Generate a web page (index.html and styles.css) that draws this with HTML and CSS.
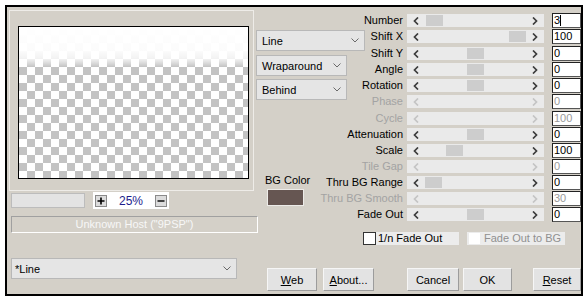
FILE: index.html
```html
<!DOCTYPE html>
<html>
<head>
<meta charset="utf-8">
<link rel="stylesheet" href="styles.css">
</head>
<body>
<div class="dialog">
  <div class="top">
    <div class="left">
      <div class="frame"><div class="preview"></div></div>
      <div class="zoomrow">
        <div class="graybox"></div>
        <div class="zoomctl">
          <span class="zbtn"><svg width="8" height="8" viewBox="0 0 8 8"><path d="M4 0.5v7M0.5 4h7" stroke="#000" stroke-width="1.6"/></svg></span>
          <span class="zval">25%</span>
          <span class="zbtn"><svg width="8" height="8" viewBox="0 0 8 8"><path d="M0.5 4h7" stroke="#000" stroke-width="1.4"/></svg></span>
        </div>
      </div>
      <div class="host">Unknown Host ("9PSP")</div>
    </div>
    <div class="mid">
      <div class="select s-line"><span>Line</span><svg class="chev" width="8" height="5" viewBox="0 0 8 5"><polyline points="0.5,0.5 4,4 7.5,0.5" fill="none" stroke="#6a6a6a"/></svg></div>
      <div class="select s-wrap"><span>Wraparound</span><svg class="chev" width="8" height="5" viewBox="0 0 8 5"><polyline points="0.5,0.5 4,4 7.5,0.5" fill="none" stroke="#6a6a6a"/></svg></div>
      <div class="select s-behind"><span>Behind</span><svg class="chev" width="8" height="5" viewBox="0 0 8 5"><polyline points="0.5,0.5 4,4 7.5,0.5" fill="none" stroke="#6a6a6a"/></svg></div>
      <div class="bglabel">BG Color</div>
      <div class="swatch"></div>
    </div>
    <div class="right">
      <div class="row"><div class="lbl">Number</div><div class="track"><svg class="arr" width="6" height="8" viewBox="0 0 6 8"><polyline points="5,0.5 1.5,4 5,7.5" fill="none"/></svg><div class="thumb" style="left:19px"></div><svg class="arr" width="6" height="8" viewBox="0 0 6 8"><polyline points="1,0.5 4.5,4 1,7.5" fill="none"/></svg></div><div class="val">3<span class="caret"></span></div></div>
      <div class="row tall"><div class="lbl">Shift X</div><div class="track"><svg class="arr" width="6" height="8" viewBox="0 0 6 8"><polyline points="5,0.5 1.5,4 5,7.5" fill="none"/></svg><div class="thumb" style="left:102px"></div><svg class="arr" width="6" height="8" viewBox="0 0 6 8"><polyline points="1,0.5 4.5,4 1,7.5" fill="none"/></svg></div><div class="val">100</div></div>
      <div class="row"><div class="lbl">Shift Y</div><div class="track"><svg class="arr" width="6" height="8" viewBox="0 0 6 8"><polyline points="5,0.5 1.5,4 5,7.5" fill="none"/></svg><div class="thumb" style="left:60px"></div><svg class="arr" width="6" height="8" viewBox="0 0 6 8"><polyline points="1,0.5 4.5,4 1,7.5" fill="none"/></svg></div><div class="val">0</div></div>
      <div class="row"><div class="lbl">Angle</div><div class="track"><svg class="arr" width="6" height="8" viewBox="0 0 6 8"><polyline points="5,0.5 1.5,4 5,7.5" fill="none"/></svg><div class="thumb" style="left:60px"></div><svg class="arr" width="6" height="8" viewBox="0 0 6 8"><polyline points="1,0.5 4.5,4 1,7.5" fill="none"/></svg></div><div class="val">0</div></div>
      <div class="row"><div class="lbl">Rotation</div><div class="track"><svg class="arr" width="6" height="8" viewBox="0 0 6 8"><polyline points="5,0.5 1.5,4 5,7.5" fill="none"/></svg><div class="thumb" style="left:60px"></div><svg class="arr" width="6" height="8" viewBox="0 0 6 8"><polyline points="1,0.5 4.5,4 1,7.5" fill="none"/></svg></div><div class="val">0</div></div>
      <div class="row tall dis"><div class="lbl">Phase</div><div class="track"><svg class="arr" width="6" height="8" viewBox="0 0 6 8"><polyline points="5,0.5 1.5,4 5,7.5" fill="none"/></svg><svg class="arr" width="6" height="8" viewBox="0 0 6 8"><polyline points="1,0.5 4.5,4 1,7.5" fill="none"/></svg></div><div class="val">0</div></div>
      <div class="row dis"><div class="lbl">Cycle</div><div class="track"><svg class="arr" width="6" height="8" viewBox="0 0 6 8"><polyline points="5,0.5 1.5,4 5,7.5" fill="none"/></svg><svg class="arr" width="6" height="8" viewBox="0 0 6 8"><polyline points="1,0.5 4.5,4 1,7.5" fill="none"/></svg></div><div class="val">100</div></div>
      <div class="row"><div class="lbl">Attenuation</div><div class="track"><svg class="arr" width="6" height="8" viewBox="0 0 6 8"><polyline points="5,0.5 1.5,4 5,7.5" fill="none"/></svg><div class="thumb" style="left:60px"></div><svg class="arr" width="6" height="8" viewBox="0 0 6 8"><polyline points="1,0.5 4.5,4 1,7.5" fill="none"/></svg></div><div class="val">0</div></div>
      <div class="row"><div class="lbl">Scale</div><div class="track"><svg class="arr" width="6" height="8" viewBox="0 0 6 8"><polyline points="5,0.5 1.5,4 5,7.5" fill="none"/></svg><div class="thumb" style="left:39px"></div><svg class="arr" width="6" height="8" viewBox="0 0 6 8"><polyline points="1,0.5 4.5,4 1,7.5" fill="none"/></svg></div><div class="val">100</div></div>
      <div class="row dis"><div class="lbl">Tile Gap</div><div class="track"><svg class="arr" width="6" height="8" viewBox="0 0 6 8"><polyline points="5,0.5 1.5,4 5,7.5" fill="none"/></svg><svg class="arr" width="6" height="8" viewBox="0 0 6 8"><polyline points="1,0.5 4.5,4 1,7.5" fill="none"/></svg></div><div class="val">0</div></div>
      <div class="row"><div class="lbl">Thru BG Range</div><div class="track"><svg class="arr" width="6" height="8" viewBox="0 0 6 8"><polyline points="5,0.5 1.5,4 5,7.5" fill="none"/></svg><div class="thumb" style="left:18px"></div><svg class="arr" width="6" height="8" viewBox="0 0 6 8"><polyline points="1,0.5 4.5,4 1,7.5" fill="none"/></svg></div><div class="val">0</div></div>
      <div class="row dis"><div class="lbl">Thru BG Smooth</div><div class="track"><svg class="arr" width="6" height="8" viewBox="0 0 6 8"><polyline points="5,0.5 1.5,4 5,7.5" fill="none"/></svg><svg class="arr" width="6" height="8" viewBox="0 0 6 8"><polyline points="1,0.5 4.5,4 1,7.5" fill="none"/></svg></div><div class="val">30</div></div>
      <div class="row"><div class="lbl">Fade Out</div><div class="track"><svg class="arr" width="6" height="8" viewBox="0 0 6 8"><polyline points="5,0.5 1.5,4 5,7.5" fill="none"/></svg><div class="thumb" style="left:60px"></div><svg class="arr" width="6" height="8" viewBox="0 0 6 8"><polyline points="1,0.5 4.5,4 1,7.5" fill="none"/></svg></div><div class="val">0</div></div>
      <div class="checks">
        <div class="cb1"><span class="box"></span><span class="cbtext">1/n Fade Out</span></div>
        <div class="cb2"><span class="box"></span><span class="cbtext">Fade Out to BG</span></div>
      </div>
    </div>
  </div>
  <div class="bottom">
    <div class="select s-preset"><span>*Line</span><svg class="chev" width="8" height="5" viewBox="0 0 8 5"><polyline points="0.5,0.5 4,4 7.5,0.5" fill="none" stroke="#6a6a6a"/></svg></div>
    <div class="btn b-web"><u>W</u>eb</div>
    <div class="btn b-about"><u>A</u>bout...</div>
    <div class="btn b-cancel">Cancel</div>
    <div class="btn b-ok">OK</div>
    <div class="btn b-reset"><u>R</u>eset</div>
  </div>
</div>
</body>
</html>
```

FILE: styles.css
```css
* { box-sizing: border-box; }
body {
  margin: 0;
  padding: 5px;
  background: #fff;
  font-family: "Liberation Sans", Arial, sans-serif;
  font-size: 11px;
  color: #000;
}
.dialog {
  width: 578px;
  height: 291px;
  border: 2px solid #000;
  background: #d4d0c8;
}
.top {
  display: flex;
  height: 251px;
  padding-top: 3px;
}
.left {
  margin-left: 2px;
  width: 245px;
  flex: none;
}
.frame {
  width: 245px;
  height: 181px;
  border: 1px solid #eeece8;
  padding: 15px 0 0 8px;
}
.preview {
  width: 231px;
  height: 153px;
  border: 1px solid #000;
  background-color: #fff;
  background-image:
    linear-gradient(to bottom, #fff 0, rgba(255,255,255,0.94) 24px, rgba(255,255,255,0.78) 32px, rgba(255,255,255,0.4) 36px, rgba(255,255,255,0) 40px),
    conic-gradient(#c3c3c3 0 25%, #fff 0 50%, #c3c3c3 0 75%, #fff 0);
  background-size: 100% 40px, 16px 16px;
  background-repeat: no-repeat, repeat;
}
.zoomrow {
  display: flex;
  align-items: flex-start;
  margin-top: 1px;
}
.graybox {
  margin: 1px 0 0 2px;
  width: 74px;
  height: 15px;
  background: #e3e3e3;
  border: 1px solid #bcbcbc;
}
.zoomctl {
  margin-left: 8px;
  width: 76px;
  height: 17px;
  background: #fff;
  display: flex;
  align-items: center;
  padding: 0 2px;
}
.zbtn {
  width: 12px;
  height: 12px;
  border: 1px solid #8a8a8a;
  background: #dcdcdc;
  display: flex;
  align-items: center;
  justify-content: center;
  flex: none;
}
.zval {
  flex: 1;
  text-align: center;
  color: #1c1c8c;
  font-size: 12px;
}
.host {
  margin: 7px 0 0 2px;
  width: 247px;
  height: 17px;
  border: 1px solid;
  border-color: #a0a0a0 #fff #fff #a0a0a0;
  color: #f7f7f7;
  text-align: center;
  line-height: 15px;
  font-size: 11px;
}
.mid {
  margin-left: 2px;
  width: 52px;
  flex: none;
}
.select {
  display: flex;
  align-items: center;
  justify-content: space-between;
  height: 21px;
  border: 1px solid #b8b8b8;
  background: #e5e5e5;
  padding: 0 5px 0 5px;
  white-space: nowrap;
  flex: none;
}
.s-line { margin-top: 20px; width: 109px; }
.s-wrap { margin-top: 4px; width: 91px; }
.s-behind { margin-top: 3px; width: 91px; }
.bglabel {
  margin: 74px 0 0 9px;
  line-height: 13px;
  white-space: nowrap;
}
.swatch {
  margin: 2px 0 0 11px;
  width: 37px;
  height: 17px;
  background: #665652;
  border: 1px solid #ecebe8;
}
.right {
  width: 273px;
  flex: none;
  padding-top: 3px;
}
.row {
  display: flex;
  align-items: flex-start;
  height: 16px;
}
.row.tall { height: 17px; }
.lbl {
  width: 95px;
  height: 13px;
  margin-top: 1px;
  line-height: 13px;
  text-align: right;
  white-space: nowrap;
  flex: none;
}
.track {
  position: relative;
  margin: 1px 0 0 4px;
  width: 137px;
  height: 13px;
  background: #eaeaea;
  display: flex;
  align-items: center;
  justify-content: space-between;
  padding: 0 6px;
  flex: none;
}
.arr polyline {
  stroke: #3c3c3c;
  stroke-width: 1.7;
}
.thumb {
  position: absolute;
  top: 1px;
  width: 17px;
  height: 11px;
  background: #cdcdcd;
}
.val {
  margin-left: 8px;
  width: 29px;
  height: 15px;
  background: #fff;
  border: 1px solid;
  border-color: #222 #555 #555 #222;
  padding-left: 1px;
  line-height: 13px;
  flex: none;
  display: flex;
  align-items: center;
}
.caret {
  display: inline-block;
  width: 1px;
  height: 11px;
  background: #000;
}
.dis .lbl { color: #a3a3a3; }
.dis .val { color: #9a9a9a; }
.dis .arr polyline { stroke: #c4c4c4; }
.checks {
  display: flex;
  margin: 9px 0 0 55px;
}
.cb1, .cb2 {
  display: flex;
  align-items: center;
  height: 13px;
}
.cb1 .box {
  width: 13px;
  height: 13px;
  border: 1px solid #333;
  background: #fff;
}
.cb1 .cbtext {
  background: #ececec;
  width: 83px;
  height: 13px;
  line-height: 13px;
  padding-left: 2px;
}
.cb2 {
  margin-left: 8px;
  width: 98px;
  background: #ececec;
  padding-left: 2px;
}
.cb2 .box {
  width: 11px;
  height: 11px;
  background: #fff;
}
.cb2 .cbtext {
  margin-left: 4px;
  color: #909090;
  line-height: 13px;
}
.bottom {
  display: flex;
  align-items: flex-start;
  padding-left: 4px;
}
.s-preset {
  width: 226px;
  padding-left: 3px;
}
.btn {
  margin-top: 10px;
  height: 23px;
  border: 1px solid;
  border-color: #f6f6f6 #9c9c9c #9c9c9c #f6f6f6;
  background: #e3e3e3;
  display: flex;
  align-items: center;
  justify-content: center;
  white-space: nowrap;
}
.btn u { text-decoration: underline; }
.b-web { margin-left: 30px; width: 50px; }
.b-about { margin-left: 6px; width: 51px; }
.b-cancel { margin-left: 33px; width: 52px; }
.b-ok { margin-left: 4px; width: 49px; }
.b-reset { margin-left: 21px; width: 48px; }
```
